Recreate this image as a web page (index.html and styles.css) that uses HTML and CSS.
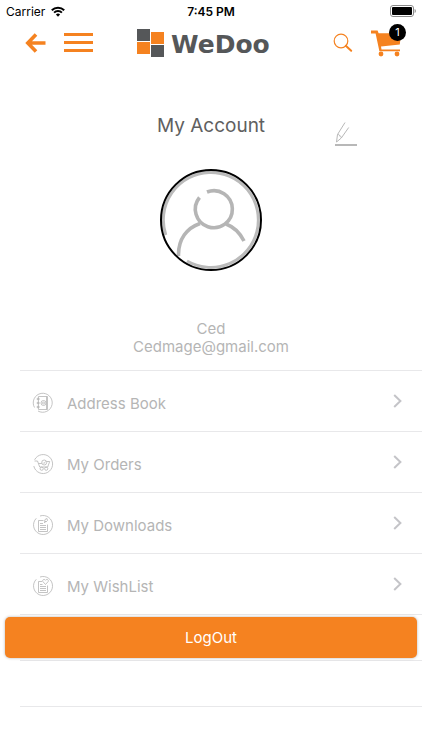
FILE: index.html
```html
<!DOCTYPE html>
<html lang="en">
<head>
    <meta charset="UTF-8">
    <meta name="viewport" content="width=device-width, initial-scale=1.0">
    <title>My Account - WeDoo</title>
    <link rel="stylesheet" href="styles.css">
</head>
<body>
    <div class="status-bar">
        <div class="carrier">
            <span>Carrier</span>
            <svg width="14" height="11" viewBox="0 0 14 11" fill="none" stroke="#000" stroke-width="2">
                <path d="M.8 4.2a8.8 8.8 0 0 1 12.4 0"/>
                <path d="M3.1 6.6a5.5 5.5 0 0 1 7.8 0"/>
                <path d="M7 10.8L4.9 8.6a3 3 0 0 1 4.2 0z" fill="#000" stroke="none"/>
            </svg>
        </div>
        <span class="time">7:45 PM</span>
        <svg class="battery" width="26" height="12" viewBox="0 0 26 12">
            <rect x=".5" y=".5" width="23" height="11" rx="2.5" fill="#fff" stroke="#8a8a8a"/>
            <rect x="2" y="2" width="20" height="8" rx="1" fill="#000"/>
            <path d="M24.6 4c1.6.6 1.6 3.4 0 4z" fill="#8a8a8a"/>
        </svg>
    </div>

    <header class="navbar">
        <div class="nav-left">
            <button class="icon-btn" aria-label="Back">
                <svg width="21" height="20" viewBox="0 0 21 20" fill="none" stroke="#f58220" stroke-width="3.6">
                    <path d="M20.5 10H3M11 1.5L2.8 10l8.2 8.5"/>
                </svg>
            </button>
            <button class="icon-btn" aria-label="Menu">
                <svg width="29" height="20" viewBox="0 0 29 20" fill="#f58220">
                    <path d="M0 0h29v3H0zM0 8h29v3H0zM0 16h29v3H0z"/>
                </svg>
            </button>
        </div>
        <a class="logo" href="#">
            <svg width="28" height="28" viewBox="0 0 28 28">
                <rect width="13" height="12" fill="#555759"/>
                <rect x="14" y="3" width="13" height="12" fill="#f58220"/>
                <rect y="13" width="13" height="12" fill="#f58220"/>
                <rect x="14" y="16" width="13" height="12" fill="#555759"/>
            </svg>
            <span>WeDoo</span>
        </a>
        <div class="nav-right">
            <button class="icon-btn" aria-label="Search">
                <svg width="20" height="20" viewBox="0 0 20 20" fill="none" stroke="#f58220">
                    <circle cx="8" cy="8" r="6.8" stroke-width="1.2"/>
                    <path d="M12.8 12.8l5.4 5" stroke-width="2" stroke-linecap="round"/>
                </svg>
            </button>
            <button class="icon-btn cart" aria-label="Cart">
                <svg width="32" height="27" viewBox="0 0 32 27" fill="#f58220">
                    <path d="M0 .5h6.6l1 2.8H30l-1.200 11.200L10 16.600l.5 2.900H29v1.700H8.400L4.600 3.400H1A1.500 1.500 0 0 1 0 .5z"/>
                    <circle cx="10" cy="24" r="2.400"/>
                    <circle cx="26" cy="24" r="2.400"/>
                </svg>
                <span class="badge">1</span>
            </button>
        </div>
    </header>

    <main>
        <div class="title-row">
            <h1>My Account</h1>
            <button class="icon-btn edit" aria-label="Edit account">
                <svg width="22" height="24" viewBox="0 0 22 24" fill="none" stroke="#b8b8b8">
                    <path d="M10 .5L2.500 12.500 1.500 20l4.800-4L13.700 5.500M2.500 12.500c1.200-.4 2 .1 2 1.500 1.200-.1 1.800.6 1.800 2"/>
                    <path d="M0 23h22" stroke-width="2"/>
                </svg>
            </button>
        </div>

        <section class="profile">
            <svg class="avatar" width="102" height="102" viewBox="0 0 102 102" fill="none">
                <path d="M5.800 66A47.500 47.500 0 1 1 27 92" stroke="#bbb" stroke-width="3"/>
                <path d="M39.500 28.500A18.500 18.500 0 1 0 47 23" stroke="#b5b5b5" stroke-width="3.600"/>
                <path d="M40 54.500C27 59 18 70 18.500 87M66 55c8 3 14 9 18 17" stroke="#b5b5b5" stroke-width="3.600"/>
                <circle cx="51" cy="51" r="50" stroke="#000" stroke-width="2"/>
            </svg>
            <p>Ced</p>
            <p>Cedmage@gmail.com</p>
        </section>

        <ul class="menu">
            <li>
                <a href="#">
                    <svg class="menu-icon" width="20" height="20" viewBox="0 0 20 20">
                        <path d="M1.500 14.500A9.500 9.500 0 1 1 5 18"/>
                        <path d="M5.500 3.500h9v13h-9zM13.500 3.500v13M4 6h3M4 10h3M4 14h3"/>
                        <circle cx="4.800" cy="6" r=".8"/><circle cx="4.800" cy="10" r=".8"/><circle cx="4.800" cy="14" r=".8"/>
                        <circle cx="10.500" cy="10" r="2.500"/><circle cx="10.500" cy="10" r="1"/>
                    </svg>
                    <span>Address Book</span>
                    <svg class="chevron" width="9" height="14" viewBox="0 0 9 14"><path d="M1.200 1l6.200 6-6.200 6"/></svg>
                </a>
            </li>
            <li>
                <a href="#">
                    <svg class="menu-icon" width="20" height="20" viewBox="0 0 20 20">
                        <path d="M1.600 5.800A9.500 9.500 0 1 1 .8 12"/>
                        <path d="M1.500 7h3l2.200 6h8l2-5.500h-3M5.500 9.500h3.300"/>
                        <circle cx="11.200" cy="8.500" r="2.500"/><path d="M10 8.500l1 1 1.500-2"/>
                        <circle cx="8.700" cy="14.700" r="1.600"/><circle cx="13.200" cy="14.700" r="1.600"/>
                    </svg>
                    <span>My Orders</span>
                    <svg class="chevron" width="9" height="14" viewBox="0 0 9 14"><path d="M1.200 1l6.200 6-6.200 6"/></svg>
                </a>
            </li>
            <li>
                <a href="#">
                    <svg class="menu-icon" width="20" height="20" viewBox="0 0 20 20">
                        <path d="M7 1A9.500 9.500 0 1 1 3.300 3.300"/>
                        <path d="M10.500 5.500H5.500v11h9V9.500M7 8.500h3M7 10.500h6M7 12.500h6M7 14.500h6"/>
                        <path d="M12 4.500l2-1 .5 2-1.500 1.500-1.500-.5zM11 8l2-2"/>
                    </svg>
                    <span>My Downloads</span>
                    <svg class="chevron" width="9" height="14" viewBox="0 0 9 14"><path d="M1.200 1l6.200 6-6.200 6"/></svg>
                </a>
            </li>
            <li>
                <a href="#">
                    <svg class="menu-icon" width="20" height="20" viewBox="0 0 20 20">
                        <path d="M7 1A9.500 9.500 0 1 1 3.300 3.300"/>
                        <path d="M9 5.500H5.500v11h9V9.500M7 8.500h2.500M7 10.500h6M7 12.500h6M7 14.500h6"/>
                        <path d="M12.500 8.500L9.800 5.500c-.8-1.800 1.700-3 2.700-1.200 1-1.800 3.500-.6 2.700 1.200z"/>
                    </svg>
                    <span>My WishList</span>
                    <svg class="chevron" width="9" height="14" viewBox="0 0 9 14"><path d="M1.200 1l6.200 6-6.200 6"/></svg>
                </a>
            </li>
            <li class="logout-row">
                <button class="logout">LogOut</button>
            </li>
            <li class="empty-row"></li>
        </ul>
    </main>
</body>
</html>
```
FILE: styles.css
```css
* {
    box-sizing: border-box;
}
body {
    font-family: Inter, "Liberation Sans", sans-serif;
    background-color: #fff;
    color: #b5b5b5;
    margin: 0;
}
svg {
    display: block;
}
.status-bar {
    display: grid;
    grid-template-columns: 1fr auto 1fr;
    align-items: center;
    height: 22px;
    padding: 0 6px;
    color: #000;
    font-size: 12px;
}
.carrier {
    display: flex;
    align-items: center;
    gap: 6px;
}
.time {
    font-weight: 600;
}
.battery {
    justify-self: end;
}
.navbar {
    display: flex;
    align-items: center;
    height: 42px;
    padding: 0 19px 0 25px;
}
.nav-left,
.nav-right {
    display: flex;
    align-items: center;
    gap: 18px;
}
.icon-btn {
    padding: 0;
    border: none;
    background: none;
    cursor: pointer;
}
.logo {
    display: flex;
    align-items: center;
    gap: 6px;
    margin: 0 auto 0 44px;
    color: #555759;
    font-family: "DejaVu Sans", sans-serif;
    font-size: 25px;
    font-weight: bold;
    line-height: 28px;
    text-decoration: none;
}
.logo span {
    padding-top: 4px;
}
.cart {
    position: relative;
}
.badge {
    position: absolute;
    top: -6px;
    right: -3px;
    width: 17px;
    height: 17px;
    border-radius: 50%;
    background-color: #000;
    color: #fff;
    font-family: Inter, sans-serif;
    font-size: 11px;
    line-height: 17px;
    text-align: center;
}
.title-row {
    display: grid;
    grid-template-columns: 1fr auto 1fr;
    align-items: center;
    margin-top: 42px;
}
.title-row h1 {
    grid-column: 2;
    margin: 0;
    color: #606060;
    font-size: 19px;
    font-weight: 400;
    line-height: 28px;
}
.edit {
    justify-self: end;
    margin-right: 65px;
    padding-top: 16px;
}
.profile {
    padding: 23px 0 14px;
    font-size: 15px;
    line-height: 18px;
    text-align: center;
}
.profile p {
    margin: 0;
}
.avatar {
    margin: 0 auto 49px;
}
.menu {
    list-style: none;
    margin: 0;
    padding: 0 0 0 20px;
}
.menu li {
    border-top: 1px solid #e8e8ea;
}
.menu a {
    display: flex;
    align-items: center;
    height: 60px;
    padding: 4px 20px 0 13px;
    color: #b5b5b5;
    font-size: 15px;
    text-decoration: none;
}
.menu-icon {
    margin-right: 14px;
    fill: none;
    stroke: #b5b5b5;
    stroke-width: .8;
    overflow: visible;
}
.chevron {
    margin: 0 0 4px auto;
    fill: none;
    stroke: #c4c4c8;
    stroke-width: 2;
}
.menu .logout-row {
    display: flex;
    padding: 2px 5px 2px 0;
}
.logout {
    flex: 1;
    height: 41px;
    margin-left: -15px;
    border: none;
    border-radius: 5px;
    background-color: #f58220;
    box-shadow: 0 0 3px rgba(0, 0, 0, 0.3);
    color: #fff;
    font-family: inherit;
    font-size: 15px;
    cursor: pointer;
}
.menu .empty-row {
    height: 47px;
    border-bottom: 1px solid #e8e8ea;
}
```
